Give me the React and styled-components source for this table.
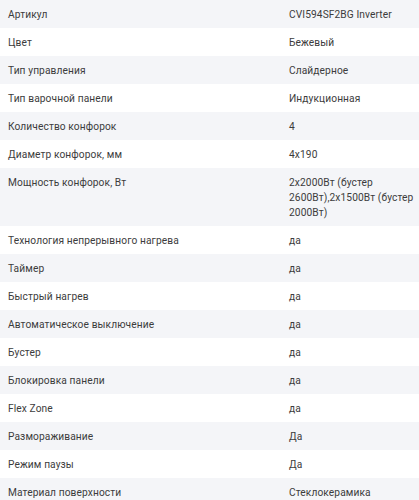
import React from 'react'
import styled, { createGlobalStyle } from 'styled-components'

const GlobalStyle = createGlobalStyle`
  body {
    margin: 0;
    background: #fff;
    font-family: Roboto, "Liberation Sans", sans-serif;
  }
`

const specs = [
  ['Артикул', 'CVI594SF2BG Inverter'],
  ['Цвет', 'Бежевый'],
  ['Тип управления', 'Слайдерное'],
  ['Тип варочной панели', 'Индукционная'],
  ['Количество конфорок', '4'],
  ['Диаметр конфорок, мм', '4x190'],
  ['Мощность конфорок, Вт', '2x2000Вт (бустер 2600Вт),2x1500Вт (бустер 2000Вт)'],
  ['Технология непрерывного нагрева', 'да'],
  ['Таймер', 'да'],
  ['Быстрый нагрев', 'да'],
  ['Автоматическое выключение', 'да'],
  ['Бустер', 'да'],
  ['Блокировка панели', 'да'],
  ['Flex Zone', 'да'],
  ['Размораживание', 'Да'],
  ['Режим паузы', 'Да'],
  ['Материал поверхности', 'Стеклокерамика'],
]

const Table = styled.div`
  width: 419px;
`

const Row = styled.div`
  display: grid;
  grid-template-columns: 281px 1fr;
  padding: 6.5px 2px 6.5px 8px;
  background: ${(p) => (p.$shaded ? '#f4f5f8' : '#fff')};
  font-size: 10.2px;
  line-height: 15px;
  letter-spacing: 0.1px;
  color: #3c3c3c;
`

const Label = styled.div`
  padding-right: 8px;
`

const Value = styled.div``

const App = () => {
  return (
    <>
      <GlobalStyle />
      <Table>
        {specs.map(([label, value], i) => (
          <Row key={label} $shaded={i % 2 === 0}>
            <Label>{label}</Label>
            <Value>{value}</Value>
          </Row>
        ))}
      </Table>
    </>
  )
}

export default App
